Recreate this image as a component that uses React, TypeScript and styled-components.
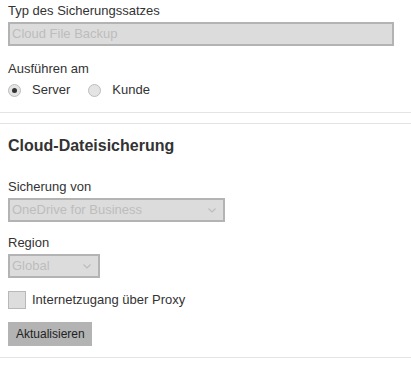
import styled, { createGlobalStyle } from "styled-components";

const GlobalStyle = createGlobalStyle`
	body {
		margin: 0;
		background: #fff;
		font-family: "Liberation Sans", Arial, sans-serif;
		font-size: 13px;
		line-height: 16px;
		color: #333;
	}
`;

const Section = styled.section<{ $top?: number; $bottom?: number }>`
	padding: ${(p) => p.$top ?? 0}px 8px ${(p) => p.$bottom ?? 0}px;
	border-top: 1px solid #e4e4e4;
	border-bottom: 1px solid #e4e4e4;
	& + & {
		margin-top: 10px;
	}
	&:first-child {
		border-top: none;
	}
`;

const Heading = styled.h3`
	margin: 0 0 23px;
	font-size: 16px;
	line-height: 20px;
	font-weight: bold;
	color: #333;
`;

const Field = styled.div<{ $gapAfter?: number }>`
	display: flex;
	flex-direction: column;
	align-items: flex-start;
	gap: 3px;
	margin-bottom: ${(p) => p.$gapAfter ?? 13}px;
`;

const Label = styled.label`
	display: block;
`;

const TextBox = styled.div<{ $width: number }>`
	box-sizing: border-box;
	width: ${(p) => p.$width}px;
	height: 24px;
	padding: 0 2px;
	display: flex;
	align-items: center;
	justify-content: space-between;
	background: #dcdcdc;
	border: 2px solid #b3b3b3;
	color: #bdbdbd;
	font-size: 13px;
`;

const Chevron = styled.svg`
	margin-right: 5px;
	flex: none;
`;

const RadioRow = styled.div`
	display: flex;
	align-items: center;
	margin-top: 5px;
	gap: 18px;
`;

const Option = styled.label`
	display: flex;
	align-items: center;
	gap: 11px;
`;

const Radio = styled.span<{ $checked?: boolean }>`
	box-sizing: border-box;
	width: 13px;
	height: 13px;
	border-radius: 50%;
	border: 1px solid #bdbdbd;
	background: #e4e4e4;
	display: flex;
	align-items: center;
	justify-content: center;
	&::after {
		content: "";
		width: 5px;
		height: 5px;
		border-radius: 50%;
		background: ${(p) => (p.$checked ? "#333" : "transparent")};
	}
`;

const CheckRow = styled.label`
	display: flex;
	align-items: center;
	gap: 6px;
	margin-bottom: 13px;
`;

const CheckBox = styled.span`
	box-sizing: border-box;
	width: 18px;
	height: 18px;
	background: #dddddd;
	border: 1px solid #b8b8b8;
`;

const Button = styled.button`
	height: 24px;
	padding: 0 7px 0 8px;
	border: none;
	background: #b3b3b3;
	color: #222;
	font-family: "Liberation Sans", Arial, sans-serif;
	font-size: 12px;
	line-height: 16px;
	display: block;
`;

function Select({ value, width }: { value: string; width: number }) {
	return (
		<TextBox $width={width}>
			<span>{value}</span>
			<Chevron width="8" height="5" viewBox="0 0 8 5">
				<path d="M0.5 0.5 L4 4 L7.5 0.5" fill="none" stroke="#bdbdbd" strokeWidth="1.2" />
			</Chevron>
		</TextBox>
	);
}

export default function App() {
	return (
		<>
			<GlobalStyle />
			<Section $top={3} $bottom={14}>
				<Field $gapAfter={15}>
					<Label>Typ des Sicherungssatzes</Label>
					<TextBox $width={386}>Cloud File Backup</TextBox>
				</Field>
				<Label>Ausführen am</Label>
				<RadioRow>
					<Option>
						<Radio $checked />
						Server
					</Option>
					<Option>
						<Radio />
						Kunde
					</Option>
				</RadioRow>
			</Section>
			<Section $top={12} $bottom={11}>
				<Heading>Cloud-Dateisicherung</Heading>
				<Field>
					<Label>Sicherung von</Label>
					<Select value="OneDrive for Business" width={217} />
				</Field>
				<Field>
					<Label>Region</Label>
					<Select value="Global" width={92} />
				</Field>
				<CheckRow>
					<CheckBox />
					Internetzugang über Proxy
				</CheckRow>
				<Button>Aktualisieren</Button>
			</Section>
		</>
	);
}
